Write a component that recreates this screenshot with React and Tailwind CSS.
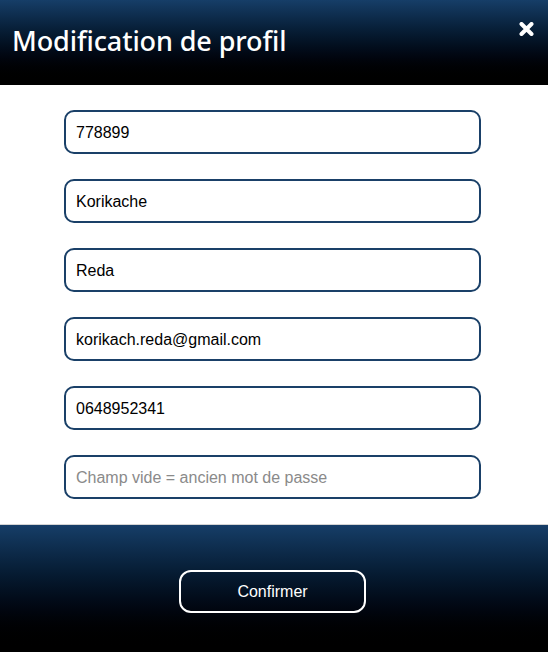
import React from "react";

const fields = [
  { value: "778899" },
  { value: "Korikache" },
  { value: "Reda" },
  { value: "korikach.reda@gmail.com" },
  { value: "0648952341" },
  { value: "", placeholder: "Champ vide = ancien mot de passe" },
];

export default function App() {
  return (
    <div className="w-[548px] h-[652px] flex flex-col bg-white" style={{ fontFamily: '"Liberation Sans", Arial, sans-serif' }}>
      <div className="h-[85px] shrink-0 bg-gradient-to-b from-[#163e68] to-[#000000] flex items-start justify-between">
        <h1 className="text-white text-[27px] leading-none pl-[12px] pt-[27px] font-medium tracking-[-0.1px]" style={{ fontFamily: '"Noto Sans", "Open Sans", sans-serif' }}>
          Modification de profil
        </h1>
        <button className="mt-[22px] mr-[14px] w-[15px] h-[14px] flex items-center justify-center">
          <svg width="15" height="14" viewBox="0 0 15 14">
            <path d="M2.5 2 L12.5 12 M12.5 2 L2.5 12" stroke="white" strokeWidth="4" strokeLinecap="round" />
          </svg>
        </button>
      </div>
      <div className="flex flex-col items-start pl-[64px] gap-[25px] py-[25px] border-b border-[#d4d4d4] shrink-0">
        {fields.map((f, i) => (
          <input
            key={i}
            defaultValue={f.value}
            placeholder={f.placeholder}
            className="w-[417px] h-[44px] border-2 border-[#1a4068] rounded-[10px] px-[10px] pt-[1px] text-[16px] text-black placeholder:text-[#8a8a8a] outline-none bg-white"
          />
        ))}
      </div>
      <div className="flex-1 bg-gradient-to-b from-[#163e68] to-[#000000] flex justify-start pl-[179px] pt-[45px]">
        <button className="w-[187px] h-[43px] border-2 border-white rounded-[12px] text-white text-[16px]">
          Confirmer
        </button>
      </div>
    </div>
  );
}
